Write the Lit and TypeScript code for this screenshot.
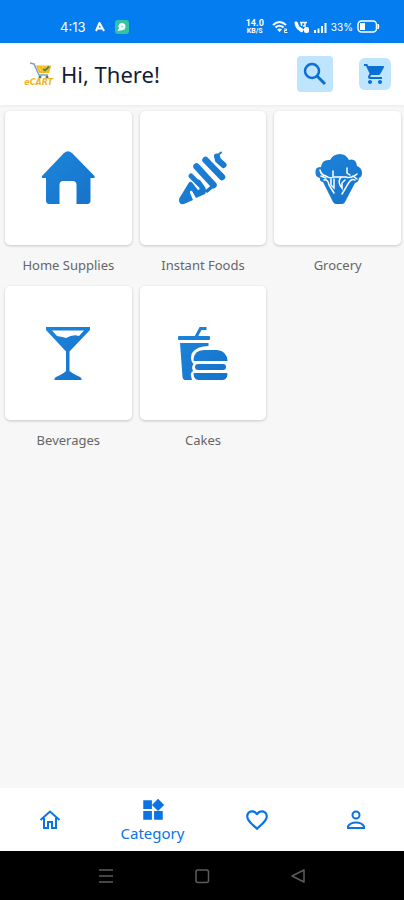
import { LitElement, html, svg, css, SVGTemplateResult } from "lit";
import { customElement, property } from "lit/decorators.js";

const art: Record<string, SVGTemplateResult> = {
  home: svg`<path d="M23 2Q27-1.500 31 2L53.500 25Q54.500 26.500 53 27H49.500V49.500Q49.500 53 46 53H35.500V34Q35.500 30 31.500 30H22.500Q18.500 30 18.500 34V53H8.500Q5 53 5 49.500V27H1.500Q0 26.500 1 25Z"/>`,
  corn: svg`
    <path d="M12 33Q14 29 16.500 32L22 39Q24.500 39 23 36L20.500 30Q21 27.500 24 29L29 36Q31 40 29 43L20 47L16 40Q13.500 39 14 42L17 49L8 53Q3 54 3 49Q3 47 5 44.500Z"/>
    <g fill="none" stroke="url(#shade)" stroke-linecap="round" stroke-width="6.500">
      <path d="M20.500 15.500L37.500 34"/><path d="M29.500 9L46 26"/>
      <path d="M41 5.500L42 9L47.500 14" stroke-width="6"/>
      <path d="M42 4L45 1.500" stroke-width="2"/>
      <path d="M37 35L31 40" stroke-width="3.500"/>
      <path d="M15 25L24 34" stroke-width="5"/>
    </g>`,
  broccoli: svg`
    <path d="M12 31Q8 30 9 27Q4 26 4.500 21Q4 16 10 16Q11 8 19 9Q22 3 29 3Q35 3 38 9Q45 7 46 15Q51 17 51 22Q51 26 48 27Q48 31 44 32L34 51Q33 53 31 53H25Q23 53 22 51Z"/>
    <g fill="none" stroke="#fff" stroke-width="1.500" stroke-linecap="round">
      <path d="M9 19Q10 24 15 25Q19 28 22 26H29L35 26Q40 28 46 23"/>
      <path d="M22 20V25"/><path d="M36 17V22L39 24"/>
      <path d="M13 29Q17 28 18 34L23 42"/><path d="M20 28V34L23 37V28"/>
      <path d="M30 26Q27 30 29 34L31 37V32L34 29"/><path d="M44 29Q40 27 37 33L31 43"/><path d="M10 25L15 27M42 25L46 28"/>
    </g>`,
  glass: svg`
    <path fill-rule="evenodd" d="M5 1H49V4L28.500 25.500V45Q32 48 39 51Q41 52 40.500 54H13.500Q13 52 15 51Q22 48 25 45V25.500L5 4ZM11 4.500L16 10Q22 11 25 12Q32 8 38 10L43 4.500Z"/>`,
  meal: svg`
    <path d="M20 11L24.500 2.500H30.500" fill="none" stroke="url(#shade)" stroke-width="3"/>
    <rect x="2" y="10" width="32" height="4" rx="1"/>
    <path d="M4 17H32.500V20Q21 20 16 27Q14 32 16 36L17.500 38Q15 41 17 45Q14 47 15 50L16 54H9Q7 54 6.500 51Z"/>
    <path d="M17.500 34Q18 24 28 24H41Q51 25 51.500 35H18.500Q17.500 35 17.500 34Z"/>
    <rect x="19" y="38" width="31" height="6" rx="3"/>
    <path d="M18.500 47H50.500Q51.500 47 51.500 48Q51 54 46 54H23Q18 54 17.500 48Q17.500 47 18.500 47Z"/>`,
};

@customElement("category-tile")
export class CategoryTile extends LitElement {
  @property() label = "";
  @property() icon = "";
  static styles = css`
    :host { display: block; }
    .tile { display: flex; flex-direction: column; width: 100%; color: #666; text-decoration: none; }
    .card {
      display: grid; place-items: center; height: 134px; background: #fff;
      border-radius: 5px; box-shadow: 0 1px 3px rgba(0, 0, 0, 0.2);
    }
    .art { width: 54px; height: 54px; overflow: visible; }
    .label { font-size: 13px; line-height: 41px; text-align: center; white-space: nowrap; }
  `;
  render() {
    return html`<a class="tile" href="#${this.icon}">
      <span class="card">
        <svg class="art" viewBox="0 0 54 54" fill="url(#shade)" aria-hidden="true">
          <defs>
            <linearGradient id="shade" gradientUnits="userSpaceOnUse" x1="0" y1="0" x2="54" y2="54">
              <stop offset="0" stop-color="#1c86dc" /><stop offset="1" stop-color="#1672c8" />
            </linearGradient>
          </defs>
          ${art[this.icon]}
        </svg>
      </span>
      <span class="label">${this.label}</span>
    </a>`;
  }
}

@customElement("app-root")
export class AppRoot extends LitElement {
  static styles = css`
    :host {
      display: flex; flex-direction: column; min-height: 100vh;
      background: #f7f7f7; font-family: "Noto Sans", "Open Sans", sans-serif;
    }
    svg { display: block; }
    button { border: 0; padding: 0; font: inherit; cursor: pointer; }
    .status {
      display: flex; align-items: center; justify-content: space-between;
      height: 43px; padding: 10px 24px 0 60px; box-sizing: border-box;
      background: #047df0; color: #fff; font-family: Roboto, sans-serif;
    }
    .group { display: flex; align-items: center; gap: 4px; }
    .left { gap: 10px; }
    .time { font-family: Inter, sans-serif; font-size: 13px; line-height: 16px; }
    .speed { display: flex; flex-direction: column; align-items: center; margin-right: 4px; font-size: 7px; line-height: 8px; font-weight: 700; }
    .rate { font-size: 9px; }
    .percent { font-family: Inter, sans-serif; font-size: 10px; line-height: 12px; }
    .header {
      display: flex; align-items: center; height: 62px; padding: 0 13px 0 20px;
      box-sizing: border-box; background: #fff; box-shadow: 0 1px 3px rgba(0, 0, 0, 0.06);
    }
    .brand { display: flex; flex-direction: column; align-items: flex-end; width: 33px; }
    .name { font: italic 700 8px/8px "DejaVu Sans", sans-serif; color: #f0b51c; }
    .title { flex: 1; margin: 0 0 0 8px; font-size: 22px; line-height: 32px; font-weight: 400; color: #101c38; }
    .tool { display: grid; place-items: center; background: #bfe4fd; color: #0b6fd6; }
    .search { width: 36px; height: 36px; border-radius: 4px; margin-right: 26px; }
    .cart { width: 32px; height: 32px; border-radius: 6px; }
    .grid {
      flex: 1; display: grid; grid-template-columns: repeat(3, 1fr);
      align-content: start; column-gap: 8px; padding: 6px 3px 0 5px;
    }
    .tabs { display: grid; grid-template-columns: 100fr 105fr 103fr 96fr; height: 63px; background: #fff; }
    .tab {
      display: flex; flex-direction: column; align-items: center; justify-content: center;
      background: none; color: #0b74e5; font-size: 15px; line-height: 20px;
    }
    .system { display: flex; align-items: center; justify-content: center; gap: 80px; height: 49px; background: #000; }
    .key { background: none; color: #5c5c5c; }
  `;

  render() {
    return html`
      <div class="status">
        <div class="group left">
          <span class="time">4:13</span>
          <svg width="10" height="10" viewBox="0 0 10 10" fill="none" stroke="#fff" stroke-width="2" stroke-linejoin="round"><path d="M1 9L4.500 1L9 9M3 6.500H7" /></svg>
          <svg width="14" height="14" viewBox="0 0 14 14"><rect width="14" height="14" rx="3" fill="#31c3a4" /><circle cx="7" cy="6.500" r="3.500" fill="#fff" /><path d="M2.500 11L5 7L8 10Z" fill="#fff" /><circle cx="7" cy="6.500" r="1" fill="#9ee2d2" /></svg>
        </div>
        <div class="group">
          <span class="speed"><span class="rate">14.0</span><span>KB/S</span></span>
          <svg width="17" height="14" viewBox="0 0 17 14" fill="none" stroke="#fff" stroke-width="2"><path d="M1 5Q7.500-1 14 5M3.500 7.500Q7.500 4 11.500 7.500" /><path d="M5 9.500Q7.500 7.500 10 9.500L7.500 12Z" fill="#fff" stroke="none" /><path d="M12 9H14.500V10.500H12.500V12.500H15.500" stroke-width="1" /></svg>
          <svg width="17" height="14" viewBox="0 0 17 14" fill="none" stroke="#fff"><path d="M2 2Q2 9 9 12L10.500 9.500L8 8Q5 7 5 4.500L4 2Z" fill="#fff" /><path d="M7 2.500H14M8.500 3V6M12 3V6L10 6" stroke-width="1.500" /><rect x="11.500" y="7.500" width="4" height="5" rx="1" fill="#fff" /></svg>
          <svg width="13" height="13" viewBox="0 0 13 13" fill="#fff"><path d="M0 10H2V13H0ZM3.500 8.500H5.500V13H3.500ZM7 6H9V13H7Z" /><path d="M10.500 3H12.500V13H10.500Z" /></svg>
          <span class="percent">33%</span>
          <svg width="23" height="13" viewBox="0 0 23 13"><rect x="1" y="1" width="18.500" height="11" rx="3.500" fill="none" stroke="#fff" stroke-width="1.500" /><path d="M3 3H8V10H3Z" fill="#fff" /><path d="M21 4Q23 6.500 21 9Z" fill="#fff" stroke="#fff" /></svg>
        </div>
      </div>

      <header class="header">
        <div class="brand">
          <svg width="24" height="17" viewBox="0 0 24 17" fill="none">
            <path d="M7 3.500H22.500L20 11H10Z" fill="#f6b921" /><path d="M10 5L12 9M14 4V9M18 4L16 10" stroke="#ffdc62" />
            <path d="M14 7L16 8.500L20 4.500" stroke="#4f8650" stroke-width="2" />
            <path d="M1 1L5 2L10 13H19" stroke="#7ea5bb" stroke-width="1.500" /><circle cx="11" cy="15" r="1.500" fill="#52758c" /><circle cx="18" cy="15" r="1.500" fill="#52758c" />
          </svg>
          <span class="name">eCART</span>
        </div>
        <h1 class="title">Hi, There!</h1>
        <button class="tool search" aria-label="Search">
          <svg width="24" height="24" viewBox="0 0 24 24" fill="none" stroke="currentColor" stroke-width="2.500"><circle cx="9" cy="9" r="7" /><path d="M14 14L22 22" stroke-width="3" /></svg>
        </button>
        <button class="tool cart" aria-label="Cart">
          <svg width="24" height="24" viewBox="0 0 24 24" fill="currentColor"><path d="M7 18c-1.100 0-1.990.9-1.990 2S5.900 22 7 22s2-.9 2-2-.9-2-2-2zM1 2v2h2l3.600 7.590-1.350 2.450c-.16.280-.25.610-.25.960 0 1.100.9 2 2 2h12v-2H7.420c-.14 0-.25-.11-.25-.25l.03-.12.9-1.630h7.450c.75 0 1.410-.41 1.750-1.030l3.580-6.490A1 1 0 0 0 20 4H5.210l-.94-2H1zm16 16c-1.100 0-1.990.9-1.990 2s.89 2 1.990 2 2-.9 2-2-.9-2-2-2z" /></svg>
        </button>
      </header>

      <main class="grid">
        <category-tile label="Home Supplies" icon="home"></category-tile>
        <category-tile label="Instant Foods" icon="corn"></category-tile>
        <category-tile label="Grocery" icon="broccoli"></category-tile>
        <category-tile label="Beverages" icon="glass"></category-tile>
        <category-tile label="Cakes" icon="meal"></category-tile>
      </main>

      <nav class="tabs">
        <button class="tab" aria-label="Home">
          <svg width="24" height="24" viewBox="0 0 24 24" fill="none" stroke="currentColor" stroke-width="2"><path d="M2.500 12L12 3.500L21.500 12M6 10V20H10V14H14V20H18V10" /></svg>
        </button>
        <button class="tab" aria-current="page">
          <svg width="26" height="26" viewBox="0 0 24 24" fill="currentColor"><path d="M13 13v8h8v-8h-8zM3 21h8v-8H3v8zM3 3v8h8V3H3zm13.660-1.310L11 7.340 16.660 13l5.660-5.660-5.660-5.650z" /></svg>
          <span>Category</span>
        </button>
        <button class="tab" aria-label="Favourites">
          <svg width="26" height="26" viewBox="0 0 24 24" fill="currentColor"><path d="M16.500 3c-1.740 0-3.410.81-4.500 2.090C10.910 3.810 9.240 3 7.500 3 4.420 3 2 5.420 2 8.500c0 3.780 3.400 6.860 8.550 11.540L12 21.350l1.450-1.320C18.600 15.360 22 12.280 22 8.500 22 5.420 19.580 3 16.500 3zm-4.400 15.550l-.1.100-.1-.1C7.140 14.240 4 11.390 4 8.500 4 6.500 5.500 5 7.500 5c1.540 0 3.040.99 3.570 2.360h1.870C13.460 5.990 14.960 5 16.500 5c2 0 3.500 1.500 3.500 3.500 0 2.890-3.140 5.740-7.900 10.050z" /></svg>
        </button>
        <button class="tab" aria-label="Profile">
          <svg width="24" height="24" viewBox="0 0 24 24" fill="none" stroke="currentColor" stroke-width="2"><circle cx="12" cy="7" r="3.500" /><path d="M4 20V18.500Q6 14.500 12 14.500T20 18.500V20Z" /></svg>
        </button>
      </nav>

      <div class="system">
        <button class="key" aria-label="Recent apps"><svg width="16" height="16" viewBox="0 0 16 16" fill="none" stroke="currentColor" stroke-width="1.500"><path d="M1 2H15M1 8H15M1 14H15" /></svg></button>
        <button class="key" aria-label="Home screen"><svg width="16" height="16" viewBox="0 0 16 16" fill="none" stroke="currentColor" stroke-width="1.500"><rect x="2" y="2" width="12.500" height="12.500" rx="2" /></svg></button>
        <button class="key" aria-label="Back"><svg width="16" height="16" viewBox="0 0 16 16" fill="none" stroke="currentColor" stroke-width="1.500" stroke-linejoin="round"><path d="M14 2V14L2 8Z" /></svg></button>
      </div>
    `;
  }
}
